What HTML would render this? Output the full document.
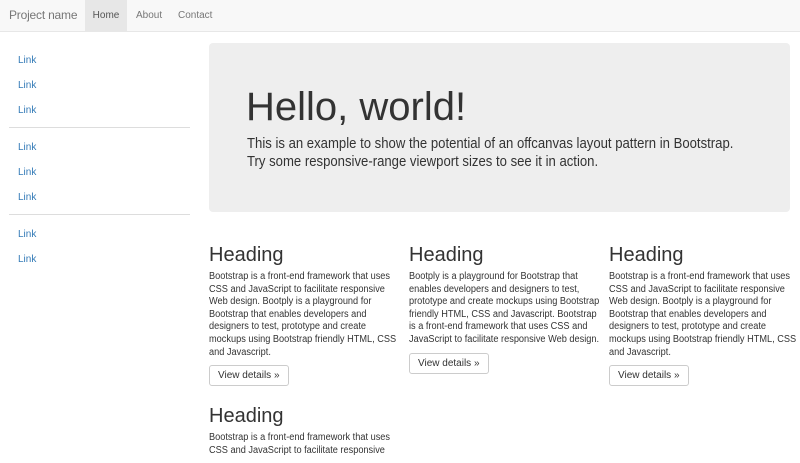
<!DOCTYPE html>
<html><head><style>
*{box-sizing:border-box;margin:0;padding:0}
body{width:800px;height:450px;overflow:hidden;font-family:"Liberation Sans",sans-serif;color:#333;background:#fff;font-size:10px;position:relative}
.nav{position:absolute;left:0;top:0;width:800px;height:32px;background:#f8f8f8;border-bottom:1px solid #e7e7e7}
.nav span{position:absolute;top:0;height:31px;line-height:31px;color:#777;font-size:10px}
.brand{font-size:12px!important;left:9px;letter-spacing:-0.2px}
.home{left:85px;width:42px;text-align:center;background:#e7e7e7;color:#555!important}
.side a{position:absolute;left:18px;color:#337ab7;font-size:10px;text-decoration:none}
.hr{position:absolute;left:9px;width:181px;border-top:1px solid #ddd}
.jumbo{position:absolute;left:209px;top:43px;width:581px;height:169px;background:#eee;border-radius:4px}
.jumbo h1{position:absolute;left:37px;top:40px;font-size:40px;font-weight:normal;line-height:48px;color:#333}
.jumbo p{position:absolute;left:38px;top:92px;font-size:15px;line-height:18px;white-space:nowrap;transform:scaleX(0.875);transform-origin:left top}
.col{position:absolute;width:200px}
.col h2{font-size:20px;font-weight:normal;line-height:24px;margin-bottom:4px}
.col p{font-size:10px;line-height:12.6px;margin-bottom:6px;white-space:nowrap;transform:scaleX(0.92);transform-origin:left top}
.btn{display:inline-block;border:1px solid #ccc;border-radius:3px;padding:0 8px;height:21px;line-height:19px;font-size:10px;color:#333}
</style></head><body>
<div class="nav"><span class="brand">Project name</span><span class="home">Home</span><span style="left:136px">About</span><span style="left:178px">Contact</span></div>
<div class="side">
<a style="top:55px">Link</a><a style="top:80px">Link</a><a style="top:105px">Link</a>
<div class="hr" style="top:127px"></div>
<a style="top:142px">Link</a><a style="top:167px">Link</a><a style="top:192px">Link</a>
<div class="hr" style="top:214px"></div>
<a style="top:229px">Link</a><a style="top:254px">Link</a>
</div>
<div class="jumbo"><h1>Hello, world!</h1><p>This is an example to show the potential of an offcanvas layout pattern in Bootstrap.<br>Try some responsive-range viewport sizes to see it in action.</p></div>
<div class="col" style="left:209px;top:243px"><h2>Heading</h2><p>Bootstrap is a front-end framework that uses<br>CSS and JavaScript to facilitate responsive<br>Web design. Bootply is a playground for<br>Bootstrap that enables developers and<br>designers to test, prototype and create<br>mockups using Bootstrap friendly HTML, CSS<br>and Javascript.</p><span class="btn">View details »</span></div>
<div class="col" style="left:409px;top:243px"><h2>Heading</h2><p>Bootply is a playground for Bootstrap that<br>enables developers and designers to test,<br>prototype and create mockups using Bootstrap<br>friendly HTML, CSS and Javascript. Bootstrap<br>is a front-end framework that uses CSS and<br>JavaScript to facilitate responsive Web design.</p><span class="btn">View details »</span></div>
<div class="col" style="left:609px;top:243px"><h2>Heading</h2><p>Bootstrap is a front-end framework that uses<br>CSS and JavaScript to facilitate responsive<br>Web design. Bootply is a playground for<br>Bootstrap that enables developers and<br>designers to test, prototype and create<br>mockups using Bootstrap friendly HTML, CSS<br>and Javascript.</p><span class="btn">View details »</span></div>
<div class="col" style="left:209px;top:404px"><h2>Heading</h2><p>Bootstrap is a front-end framework that uses<br>CSS and JavaScript to facilitate responsive</p></div>
</body></html>
